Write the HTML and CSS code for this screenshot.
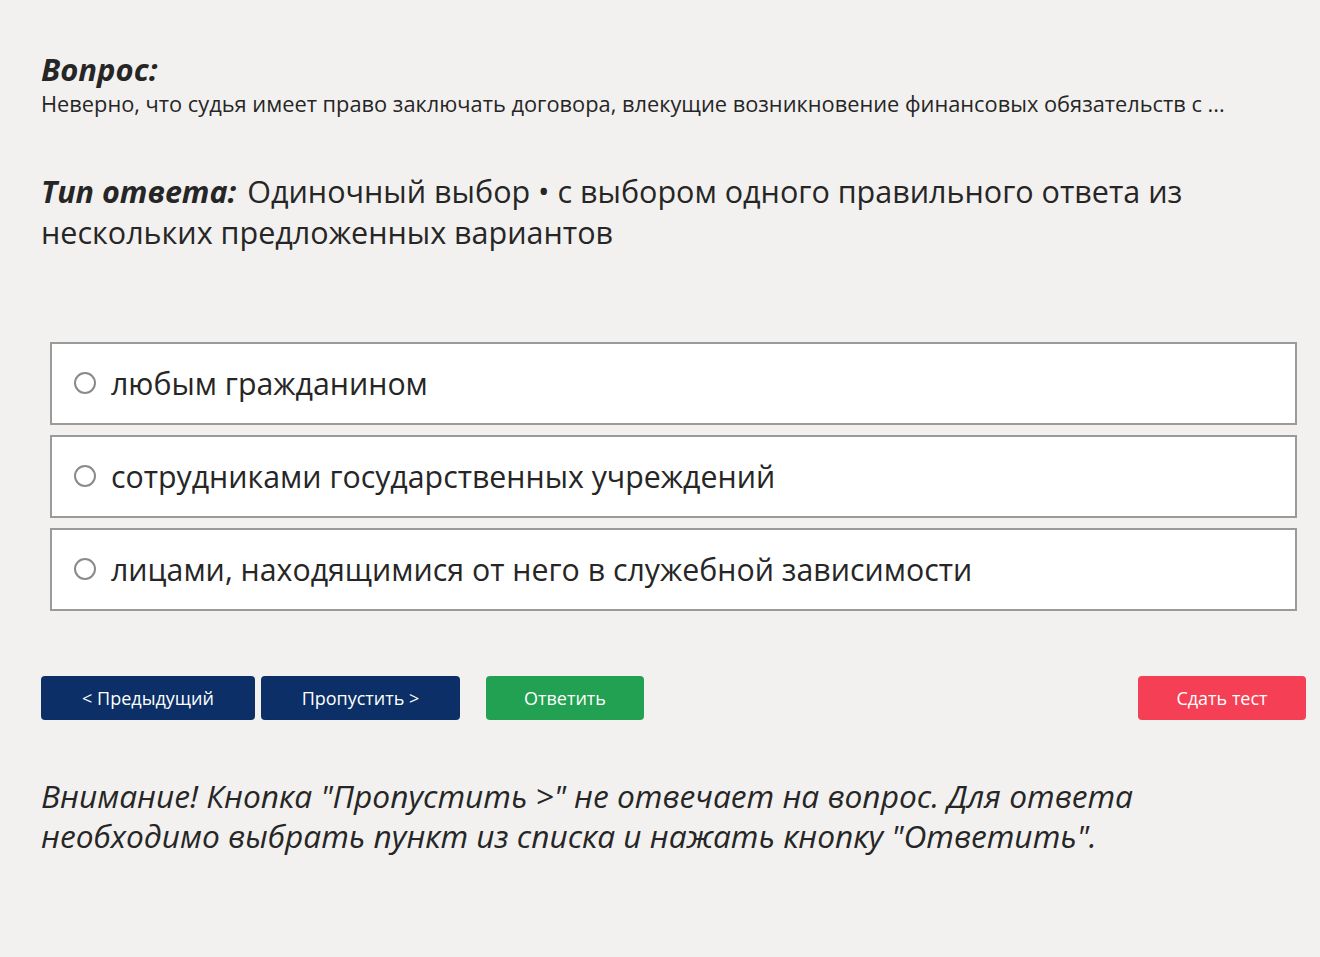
FILE: index.html
```html
<!DOCTYPE html>
<html lang="ru">
<head>
    <meta charset="UTF-8">
    <meta name="viewport" content="width=device-width, initial-scale=1.0">
    <title>Тест</title>
    <link rel="stylesheet" href="styles.css">
</head>
<body>

<div class="page">
    <div class="question">
        <h2 class="label">Вопрос:</h2>
        <p class="question-text">Неверно, что судья имеет право заключать договора, влекущие возникновение финансовых обязательств с ...</p>
    </div>

    <p class="answer-type"><b class="label-inline">Тип ответа:</b> Одиночный выбор • с выбором одного правильного ответа из нескольких предложенных вариантов</p>

    <form class="options">
        <label class="option">
            <input type="radio" name="answer">
            <span>любым гражданином</span>
        </label>
        <label class="option">
            <input type="radio" name="answer">
            <span>сотрудниками государственных учреждений</span>
        </label>
        <label class="option">
            <input type="radio" name="answer">
            <span>лицами, находящимися от него в служебной зависимости</span>
        </label>
    </form>

    <div class="buttons">
        <button type="button" class="btn btn-blue btn-prev">&lt; Предыдущий</button>
        <button type="button" class="btn btn-blue btn-skip">Пропустить &gt;</button>
        <button type="button" class="btn btn-green btn-answer">Ответить</button>
        <button type="button" class="btn btn-red btn-finish">Сдать тест</button>
    </div>

    <p class="warning">Внимание! Кнопка "Пропустить &gt;" не отвечает на вопрос. Для ответа необходимо выбрать пункт из списка и нажать кнопку "Ответить".</p>
</div>

</body>
</html>
```

FILE: styles.css
```css
body {
    margin: 0;
    background: #f2f1ef;
    color: #262626;
    font-family: "Open Sans", "Noto Sans", sans-serif;
}

.page {
    padding: 50px 14px 40px 41px;
}

.label {
    margin: 0;
    font-size: 31px;
    font-style: italic;
    font-weight: 700;
    line-height: 38px;
}

.question-text {
    margin: 0;
    font-size: 21.8px;
    line-height: 32px;
}

.answer-type {
    margin: 51px 0 0;
    font-size: 30.5px;
    line-height: 41px;
    max-width: 1200px;
}

.label-inline {
    font-style: italic;
    font-weight: 700;
    margin-right: 3px;
}

.options {
    margin: 89px 9px 0 9px;
    display: flex;
    flex-direction: column;
    gap: 10px;
}

.option {
    box-sizing: border-box;
    display: flex;
    align-items: center;
    height: 83px;
    padding-left: 22px;
    background: #fff;
    border: 2px solid #9a9a9a;
    font-size: 30.3px;
    cursor: pointer;
}

.option input {
    appearance: none;
    flex: none;
    width: 22px;
    height: 22px;
    margin: 0 15px 2px 0;
    border: 2px solid #8a8a8a;
    border-radius: 50%;
    background: #fff;
}

.buttons {
    display: flex;
    margin-top: 65px;
}

.btn {
    height: 44px;
    border: none;
    border-radius: 4px;
    color: #fff;
    font-family: inherit;
    font-size: 18px;
    cursor: pointer;
}

.btn-blue {
    background: #0b2f66;
}

.btn-green {
    background: #22a152;
}

.btn-red {
    background: #f43f55;
}

.btn-prev {
    width: 214px;
}

.btn-skip {
    width: 199px;
    margin-left: 6px;
}

.btn-answer {
    width: 158px;
    margin-left: 26px;
}

.btn-finish {
    width: 168px;
    margin-left: auto;
}

.warning {
    margin: 56px 0 0;
    font-size: 31.7px;
    font-style: italic;
    line-height: 40px;
    max-width: 1180px;
}
```
